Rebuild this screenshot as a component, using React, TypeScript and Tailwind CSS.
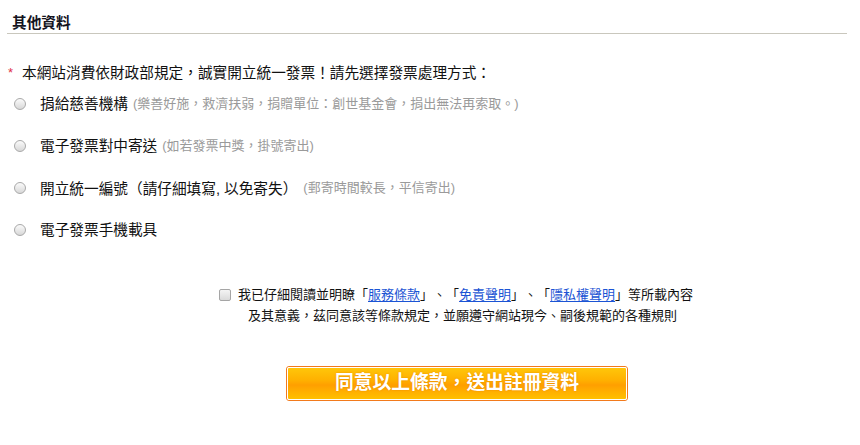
import React from "react";

const font = "font-['Liberation_Sans','Noto_Sans_CJK_TC',sans-serif]";

function Radio() {
  return (
    <span className="inline-block w-[12px] h-[12px] rounded-full border border-[#a9a9a9] bg-[linear-gradient(to_bottom,#fbfbfb,#d8d8d8)] shrink-0" />
  );
}

function Option({ label, note, noteGap = "ml-[5px]" }: { label: React.ReactNode; note?: string; noteGap?: string }) {
  return (
    <div className="h-[42px] flex items-center pl-[14px]">
      <Radio />
      <span className="ml-[14px] text-[14.67px] text-[#111] whitespace-nowrap">{label}</span>
      {note && <span className={`${noteGap} text-[13px] text-[#9a9a9a] whitespace-nowrap`}>{note}</span>}
    </div>
  );
}

export default function App() {
  return (
    <div className={`w-[860px] h-[445px] bg-white overflow-hidden [text-spacing-trim:space-all] ${font}`}>
      <div className="mx-[7px] w-[840px] pt-[13px] border-b border-[#c9c7bd]">
        <div className="pl-[5px] leading-[20px] text-[14.67px] font-bold text-[#14141e]">其他資料</div>
      </div>

      <div className="mt-[28px] h-[21px] flex items-center pl-[8px]">
        <span className="text-[#e0304a] text-[13px] w-[14px]">*</span>
        <span className="text-[14.67px] text-[#111] whitespace-nowrap">
          本網站消費依財政部規定，誠實開立統一發票！請先選擇發票處理方式：
        </span>
      </div>

      <div>
        <Option label="捐給慈善機構" note="(樂善好施，救濟扶弱，捐贈單位：創世基金會，捐出無法再索取。)" />
        <Option label="電子發票對中寄送" note="(如若發票中獎，掛號寄出)" />
        <Option
          label={
            <>
              開立統一編號<span className="font-['Noto_Sans_CJK_TC',sans-serif]">（</span>請仔細填寫, 以免寄失<span className="font-['Noto_Sans_CJK_TC',sans-serif]">）</span>
            </>
          }
          note="(郵寄時間較長，平信寄出)"
          noteGap="ml-[6px]"
        />
        <Option label="電子發票手機載具" />
      </div>

      <div className="mt-[33px] text-[13px] text-[#111] leading-[21px]">
        <div className="flex items-center pl-[219px] whitespace-nowrap">
          <span className="inline-block w-[12px] h-[12px] rounded-[2px] border border-[#a5a5a5] bg-[linear-gradient(to_bottom,#f4f4f4,#dadada)] shrink-0" />
          <span className="ml-[7px]">
            我已仔細閱讀並明瞭「<a className="text-[#1b54d4] underline underline-offset-2">服務條款</a>」、「<a className="text-[#1b54d4] underline underline-offset-2">免責聲明</a>」、「<a className="text-[#1b54d4] underline underline-offset-2">隱私權聲明</a>」等所載內容
          </span>
        </div>
        <div className="pl-[248px] whitespace-nowrap">
          及其意義，茲同意該等條款規定，並願遵守網站現今、嗣後規範的各種規則
        </div>
      </div>

      <div className="mt-[40px] ml-[286px]">
        <button className="w-[342px] h-[35px] rounded-[3px] border border-[#f27a1c] p-0">
          <span className="flex items-center justify-center w-full h-full rounded-[2px] border border-white bg-[linear-gradient(to_bottom,#ffc60a_0%,#ffb000_40%,#ff9f00_55%,#ffb200_80%,#ffc000_100%)] text-white text-[18.8px] font-semibold [text-shadow:0_0_2px_#e88a00]">
            同意以上條款，送出註冊資料
          </span>
        </button>
      </div>
    </div>
  );
}
